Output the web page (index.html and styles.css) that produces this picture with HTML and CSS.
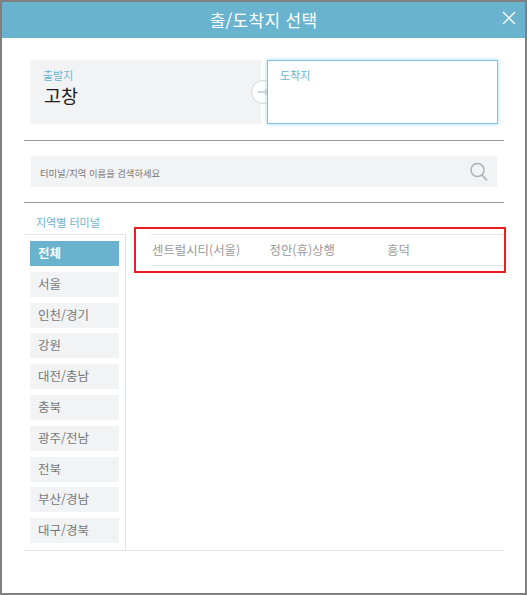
FILE: index.html

```html
<!DOCTYPE html>
<html lang="ko">
<head>
    <meta charset="UTF-8">
    <meta name="viewport" content="width=device-width, initial-scale=1.0">
    <title>출/도착지 선택</title>
    <link rel="stylesheet" href="styles.css">
</head>
<body>
    <div class="popup">
        <div class="popup-head">
            <h1>출/도착지 선택</h1>
            <button class="close" aria-label="닫기">
                <svg width="14" height="14" viewBox="0 0 14 14"><path d="M1 1L13 13M13 1L1 13" stroke="#fff" stroke-width="1.4" fill="none"/></svg>
            </button>
        </div>

        <div class="route">
            <div class="route-box">
                <span class="route-label">출발지</span>
                <span class="route-name">고창</span>
            </div>
            <div class="route-arrow">
                <svg width="24" height="24" viewBox="0 0 24 24"><circle cx="12" cy="12" r="11.5" fill="#fff" stroke="#d4d4d4"/><path d="M7 12H17M14 9.5L17 12L14 14.5" stroke="#a8a8a8" fill="none"/></svg>
            </div>
            <div class="route-box active">
                <span class="route-label">도착지</span>
            </div>
        </div>

        <div class="search-wrap">
            <div class="search">
                <span class="search-text">터미널/지역 이름을 검색하세요</span>
                <svg width="18" height="20" viewBox="0 0 18 20"><circle cx="7.5" cy="8" r="6.5" fill="none" stroke="#aeb2b8" stroke-width="1.5"/><path d="M12 13L17 18.5" stroke="#aeb2b8" stroke-width="1.8"/></svg>
            </div>
        </div>

        <div class="terminal-title">지역별 터미널</div>
        <div class="terminal">
            <ul class="areas">
                <li class="on">전체</li>
                <li>서울</li>
                <li>인천/경기</li>
                <li>강원</li>
                <li>대전/충남</li>
                <li>충북</li>
                <li>광주/전남</li>
                <li>전북</li>
                <li>부산/경남</li>
                <li>대구/경북</li>
            </ul>
            <div class="results">
                <div class="result-row">
                    <span>센트럴시티(서울)</span>
                    <span>정안(휴)상행</span>
                    <span>흥덕</span>
                </div>
            </div>
            <div class="mark"></div>
        </div>
    </div>
</body>
</html>
```

FILE: styles.css

```css
* {
    box-sizing: border-box;
}

body {
    margin: 0;
    font-family: "Noto Sans CJK KR", "Noto Sans", sans-serif;
    background-color: #fff;
}

.popup {
    width: 527px;
    height: 595px;
    border: 2px solid #808080;
    background-color: #fff;
}

.popup-head {
    position: relative;
    height: 36px;
    background-color: #69b3cf;
    display: flex;
    align-items: center;
    justify-content: center;
}

.popup-head h1 {
    margin: 0;
    font-size: 17px;
    font-weight: 400;
    line-height: 36px;
    letter-spacing: 0.3px;
    color: #fff;
}

.close {
    position: absolute;
    right: 7px;
    top: 7px;
    width: 18px;
    height: 18px;
    padding: 2px;
    border: 0;
    background: none;
    display: flex;
}

.route {
    position: relative;
    display: flex;
    justify-content: space-between;
    margin: 22px 27px 0 28px;
    height: 64px;
}

.route-box {
    width: 231px;
    height: 64px;
    padding: 8px 13px;
    background-color: #f2f3f5;
    display: flex;
    flex-direction: column;
}

.route-box.active {
    position: relative;
    background-color: #fff;
    border: 1px solid #7cc3e0;
    box-shadow: 0 0 4px #9bd6ec;
    padding: 7px 12px;
}

.route-label {
    font-size: 11px;
    line-height: 14px;
    color: #69b3cf;
}

.route-name {
    margin-top: 1px;
    padding-left: 1px;
    font-size: 18.5px;
    line-height: 24px;
    color: #222;
}

.route-arrow {
    position: absolute;
    left: 221px;
    top: 20px;
    width: 24px;
    height: 24px;
}

.search-wrap {
    margin: 16px 21px 0 22px;
    padding: 15px 7px 15px;
    border-top: 1px solid #999;
    border-bottom: 1px solid #999;
}

.search {
    height: 31px;
    padding: 0 9px;
    background-color: #f2f3f5;
    display: flex;
    align-items: center;
    justify-content: space-between;
    font-size: 9.3px;
    color: #777;
}

.search-text {
    padding-top: 2px;
}

.terminal-title {
    margin: 12px 0 0 34px;
    font-size: 11px;
    line-height: 15px;
    color: #69b3cf;
}

.terminal {
    position: relative;
    display: flex;
    height: 317px;
    margin: 4px 21px 0 22px;
    border-bottom: 1px solid #e4e4e4;
}

.areas {
    width: 102px;
    margin: 0;
    padding: 6px 6px 0;
    list-style: none;
    border-top: 1px solid #e4e4e4;
    border-right: 1px solid #e4e4e4;
}

.areas li {
    height: 25px;
    margin-bottom: 5.8px;
    padding-left: 8px;
    background-color: #f2f3f5;
    font-size: 12.5px;
    line-height: 23px;
    color: #777;
}

.areas li.on {
    background-color: #69b3cf;
    color: #fff;
    font-weight: 700;
}

.results {
    flex: 1;
    padding-left: 25px;
}

.result-row {
    display: flex;
    height: 32px;
    border-top: 1px solid #e4e4e4;
    border-bottom: 1px solid #e4e4e4;
    align-items: center;
}

.result-row span {
    width: 117.5px;
    padding-left: 1px;
    font-size: 12.4px;
    color: #999;
}

.mark {
    position: absolute;
    left: 110px;
    top: -7px;
    width: 372px;
    height: 46px;
    border: 2px solid #ed1c24;
}
```
